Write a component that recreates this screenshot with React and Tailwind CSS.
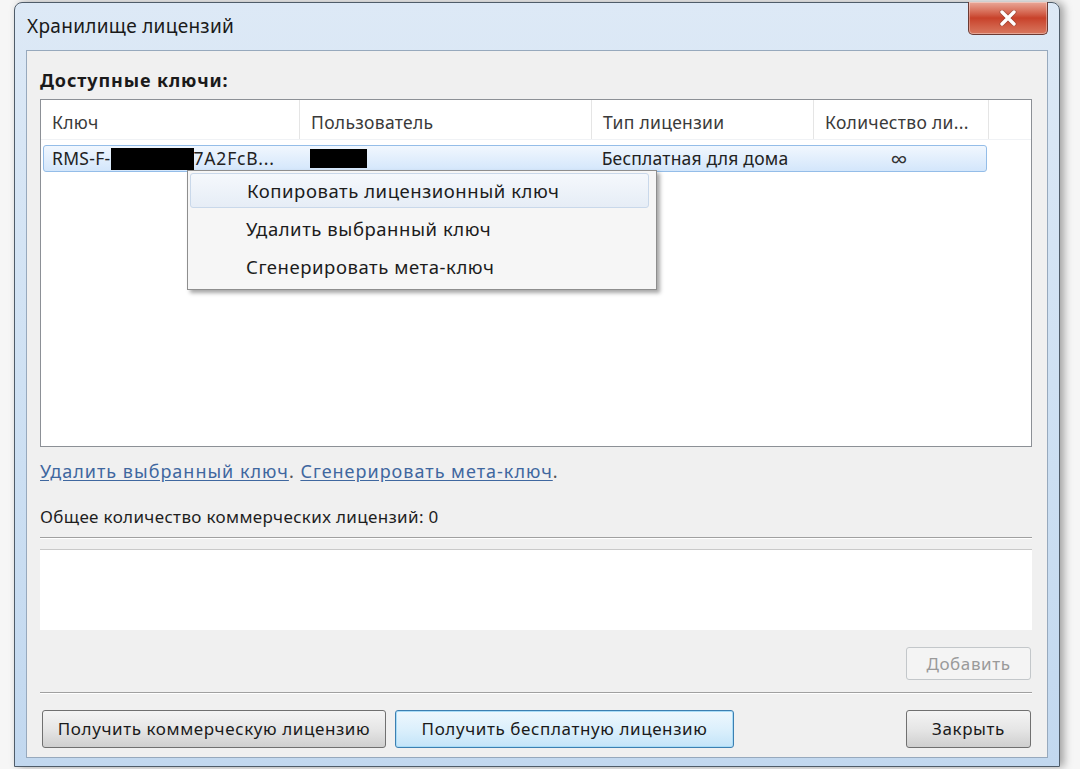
import React from 'react';

const font = { fontFamily: '"Noto Sans", "Open Sans", sans-serif' };

const columns = [
  { title: 'Ключ', width: 'w-[259px]' },
  { title: 'Пользователь', width: 'w-[292px]' },
  { title: 'Тип лицензии', width: 'w-[222px]' },
  { title: 'Количество ли...', width: 'w-[175px]' },
];

const menuItems = [
  'Копировать лицензионный ключ',
  'Удалить выбранный ключ',
  'Сгенерировать мета-ключ',
];

const WinButton = ({ children, className = '', variant = 'default' }) => {
  const look = {
    default:
      'border-[#707070] bg-gradient-to-b from-[#f4f4f4] via-[#e6e6e6] to-[#cfcfcf] text-[#1a1a1a]',
    focused:
      'border-[#3c7fb1] bg-gradient-to-b from-[#eef7fd] via-[#dcf0fc] to-[#c3e4f9] text-[#1a1a1a] shadow-[inset_0_0_0_1px_#a9dcf7]',
    disabled: 'border-[#c3c7ca] bg-[#f4f4f4] text-[#9a9a9a]',
  }[variant];

  return (
    <button
      className={`h-[38px] rounded-[3px] border text-[17px] tracking-[0.6px] ${look} ${className}`}
    >
      {children}
    </button>
  );
};

const ContextMenu = () => (
  <div className="absolute left-[146px] top-[70px] w-[470px] h-[120px] border border-[#8e8e8e] bg-[#f6f6f6] p-[2px] shadow-[3px_3px_4px_rgba(0,0,0,0.35)]">
    {menuItems.map((item, i) => (
      <div
        key={item}
        className={`flex items-center pl-[56px] text-[18.5px] tracking-[0.55px] text-[#1c1c1c] rounded-[3px] ${
          i === 0
            ? 'border border-[#c9d8ea] bg-gradient-to-b from-[#f5f8fc] to-[#e6edf6] w-[459px] h-[35px] mb-[2px]'
            : 'h-[38px]'
        }`}
      >
        {item}
      </div>
    ))}
  </div>
);

const KeysList = () => (
  <div className="relative h-[348px] border border-[#8c9096] bg-white">
    <div className="flex h-[40px] border-b border-[#f0f2f5]">
      {columns.map((col) => (
        <div
          key={col.title}
          className={`${col.width} flex items-center pt-[6px] px-[11px] border-r border-[#e5e5e5] text-[17.5px] tracking-[0.3px] text-[#3a3a3a]`}
        >
          {col.title}
        </div>
      ))}
    </div>

    {/* selected row */}
    <div className="mt-[5px] ml-[2px] w-[944px] h-[27px] flex items-center rounded-[3px] border border-[#94bde8] bg-gradient-to-b from-[#f1f7fe] to-[#d3e6fb] text-[17.5px] text-[#222]">
      <div className="w-[257px] flex items-center pl-[8px] tracking-[0.3px]">
        <span>RMS-F-</span>
        <span className="inline-block w-[83px] h-[22px] bg-black" />
        <span className="tracking-[0.8px]">7A2FcB...</span>
      </div>
      <div className="w-[292px] pl-[10px]">
        <span className="block w-[57px] h-[19px] bg-black" />
      </div>
      <div className="w-[222px] pl-[11px] tracking-[0.2px]">Бесплатная для дома</div>
      <div className="w-[175px] text-center text-[24px] leading-[24px] text-[#333]">∞</div>
    </div>

    <ContextMenu />
  </div>
);

const TitleBar = () => (
  <div className="h-[47px] flex items-start justify-between">
    <div className="pt-[9px] pl-[1px] text-[19px] text-[#1a1a1a] tracking-[0.3px]">
      Хранилище лицензий
    </div>
    <button className="w-[80px] h-[33px] -mt-[1px] rounded-b-[5px] border border-t-0 border-[#6b3a33] bg-gradient-to-b from-[#e9a898] via-[#c8412a] to-[#d8775f] flex items-center justify-center shadow-[inset_0_0_0_1px_rgba(255,255,255,0.35)]">
      <svg width="18" height="16" viewBox="0 0 18 16">
        <path
          d="M3 2 L15 14 M15 2 L3 14"
          stroke="#5a2a22"
          strokeWidth="5"
          strokeLinecap="round"
          opacity="0.35"
        />
        <path d="M3 2 L15 14 M15 2 L3 14" stroke="#ffffff" strokeWidth="3.4" strokeLinecap="round" />
      </svg>
    </button>
  </div>
);

const App = () => {
  return (
    <div className="w-[1080px] h-[769px] bg-[#f6f6f6] overflow-hidden pt-[2px] pl-[14px]" style={font}>
      <div className="w-[1046px] h-[765px] rounded-t-[8px] border border-[#4f5c69] bg-gradient-to-b from-[#dde9f6] via-[#cfe1f3] to-[#c2d8ef] px-[11px] shadow-[4px_0_8px_rgba(0,0,0,0.35)]">
        <TitleBar />

        <div className="h-[708px] border border-[#97a9bd] bg-[#f0f0f0] pl-[13px] pr-[15px]">
          <div className="pt-[19px] h-[39px] leading-[20px] text-[18px] font-bold text-[#1a1a1a] tracking-[0.9px]">
            Доступные ключи:
          </div>

          <div className="mt-[9px]">
            <KeysList />
          </div>

          <div className="mt-[14px] h-[20px] leading-[20px] text-[18px] text-[#3f679f] tracking-[1px]">
            <span className="underline underline-offset-2">Удалить выбранный ключ</span>
            <span className="text-[#555]">. </span>
            <span className="underline underline-offset-2">Сгенерировать мета-ключ</span>
            <span className="text-[#555]">.</span>
          </div>

          <div className="mt-[26px] h-[20px] leading-[20px] text-[17px] text-[#1e1e1e] tracking-[0.35px]">
            Общее количество коммерческих лицензий: 0
          </div>

          <div className="mt-[10px] border-t border-[#a0a0a0] border-b border-b-white" />

          <div className="mt-[10px] h-[81px] bg-white border-t border-[#c9c9c9]" />

          <div className="mt-[17px] flex justify-end pr-[1px]">
            <WinButton variant="disabled" className="w-[125px] !h-[33px]">
              Добавить
            </WinButton>
          </div>

          <div className="mt-[12px] border-t border-[#a0a0a0] border-b border-b-white" />

          <div className="mt-[16px] flex items-center pl-[2px] pr-[1px]">
            <WinButton className="w-[344px]">Получить коммерческую лицензию</WinButton>
            <WinButton variant="focused" className="ml-[9px] w-[339px]">
              Получить бесплатную лицензию
            </WinButton>
            <WinButton className="ml-auto w-[125px]">Закрыть</WinButton>
          </div>
        </div>
      </div>
    </div>
  );
};

export default App;
